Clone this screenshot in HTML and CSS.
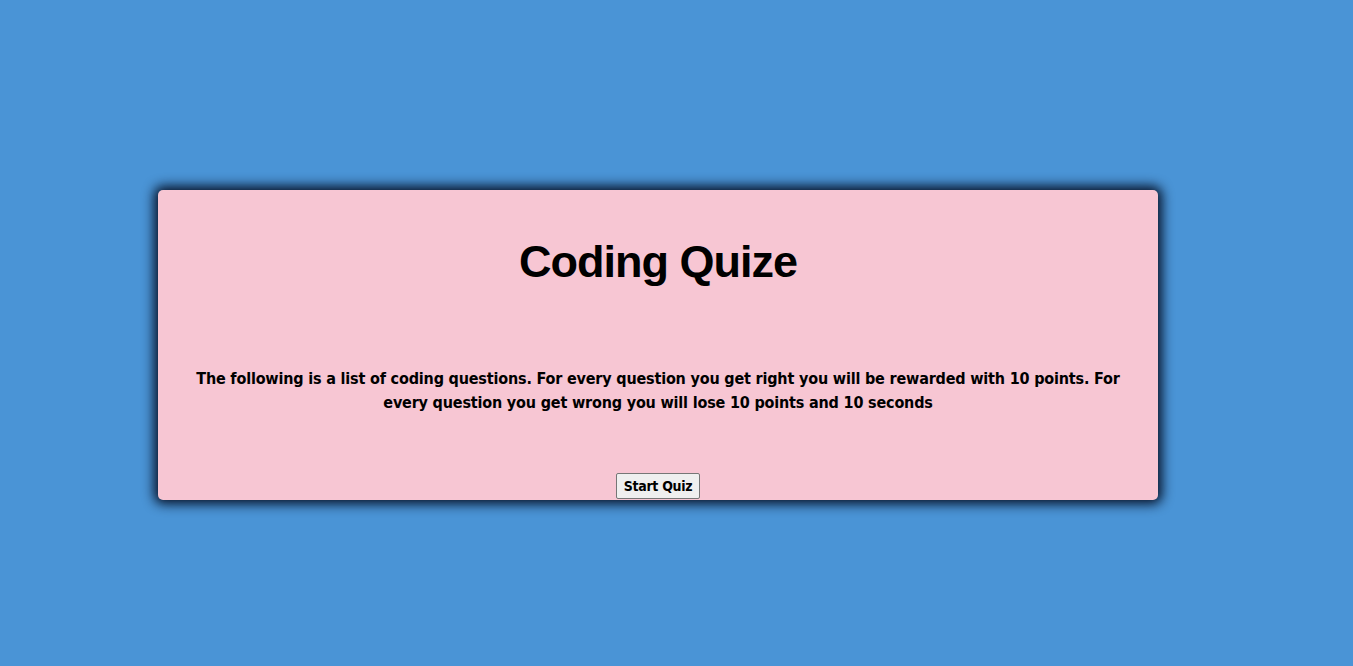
FILE: index.html
```html
<!DOCTYPE html>
<html lang="en">
<head>
<meta charset="utf-8">
<title>Coding Quize</title>
<link rel="stylesheet" href="styles.css">
</head>
<body>
<main class="page">
  <section class="card">
    <h1 class="title">Coding Quize</h1>
    <p class="intro">The following is a list of coding questions. For every question you get right you will be rewarded with 10 points. For every question you get wrong you will lose 10 points and 10 seconds</p>
    <button class="start" type="button">Start Quiz</button>
  </section>
</main>
</body>
</html>
```

FILE: styles.css
```css
html, body {
  margin: 0;
  padding: 0;
  height: 100%;
}
body {
  background: #4a94d6;
  font-family: "DejaVu Sans Condensed", "DejaVu Sans", sans-serif;
  font-stretch: condensed;
}
.page {
  display: flex;
  justify-content: center;
  padding-top: 190px;
  padding-right: 37px;
}
.card {
  box-sizing: border-box;
  width: 1000px;
  height: 310px;
  background: #f7c6d3;
  border-radius: 5px;
  box-shadow: 0 0 12px 4px rgba(2, 10, 28, 0.95);
  padding: 32px 24px 0;
  display: flex;
  flex-direction: column;
  align-items: center;
  overflow: hidden;
}
.title {
  margin: 0;
  font-family: "Liberation Sans", Arial, sans-serif;
  font-stretch: normal;
  font-weight: bold;
  font-size: 45px;
  line-height: 80px;
  letter-spacing: -1px;
  color: #000;
}
.intro {
  margin: 65px 0 0;
  font-size: 16px;
  line-height: 24px;
  font-weight: bold;
  letter-spacing: -0.18px;
  text-align: center;
  color: #000;
}
.start {
  margin-top: 58px;
  height: 26px;
  padding: 0 7px;
  font-family: "DejaVu Sans Condensed", "DejaVu Sans", sans-serif;
  font-stretch: condensed;
  font-weight: bold;
  font-size: 14px;
  letter-spacing: -0.3px;
  color: #000;
  background: #efefef;
  border: 1px solid #767676;
  border-radius: 2px;
}
```
